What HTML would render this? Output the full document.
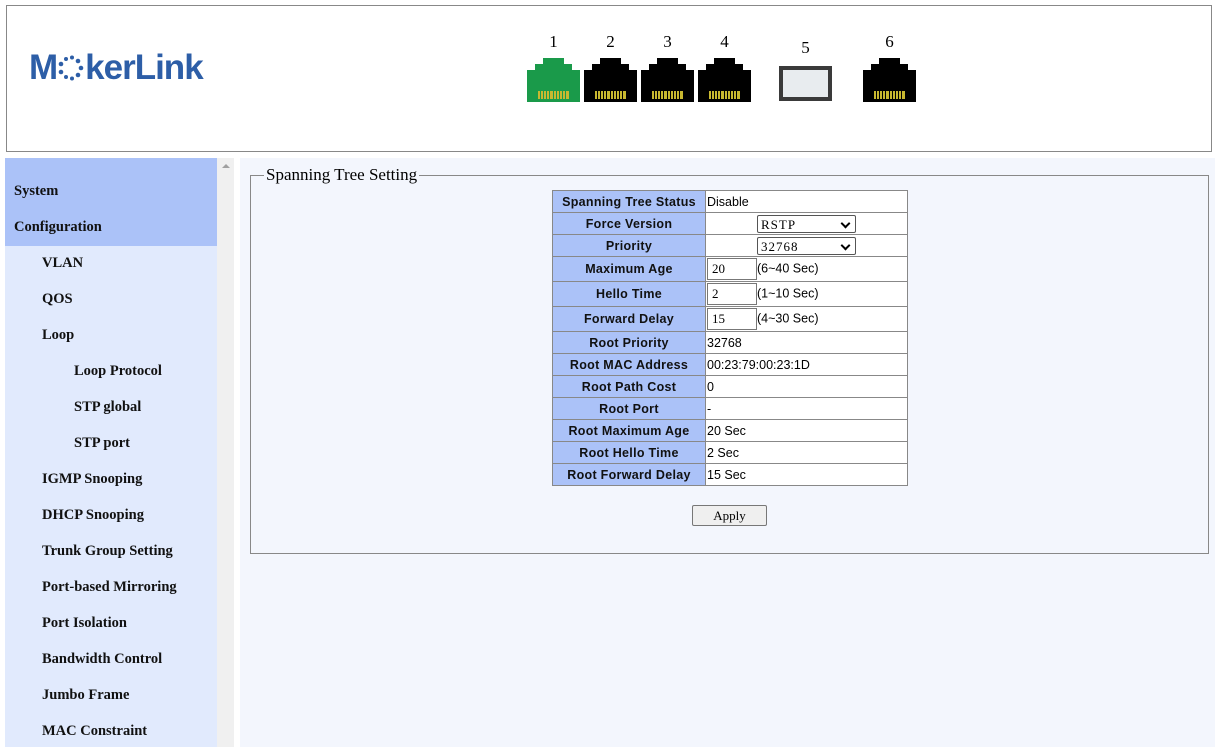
<!DOCTYPE html>
<html><head><meta charset="utf-8"><style>
body{margin:0;width:1215px;height:747px;overflow:hidden;background:#fff;font-family:"Liberation Serif",serif;position:relative}
.abs{position:absolute}
#hdr{left:6px;top:5px;width:1204px;height:145px;border:1px solid #888;background:#fff}
.num{position:absolute;top:32px;font-size:17px;width:53px;text-align:center}
#side{left:5px;top:158px;width:212px;height:589px;background:#e1eafd}
#sidetop{left:5px;top:158px;width:212px;height:88px;background:#abc2f8}
.si{position:absolute;font-weight:bold;font-size:14.5px;color:#111}
#scroll{left:217px;top:158px;width:17px;height:589px;background:#f0f0f0}
#main{left:240px;top:158px;width:975px;height:589px;background:#f3f6fd}
#fs{left:250px;top:175px;width:957px;height:377px;border:1px solid #888}
#leg{left:264px;top:165px;font-size:17px;background:#f3f6fd;padding:0 2px}
table{position:absolute;left:552px;top:190px;border-collapse:collapse;font-family:"Liberation Sans",sans-serif;font-size:12.5px}
td{border:1px solid #888;padding:0 1px;height:21px}
td.l{background:#abc2f8;font-weight:bold;width:150px;text-align:center;color:#111;letter-spacing:.3px}
td.v{background:#fff;width:199px}
tr.t td{height:24px}
.sel{display:inline-block;margin-left:50px;height:18px;border:1px solid #555;border-radius:2px;font-family:"Liberation Serif",serif;font-size:13px;line-height:17px;padding-left:3px;box-sizing:border-box;width:99px;position:relative;letter-spacing:1px;vertical-align:middle}
.sel:after{content:"";position:absolute;right:6px;top:4px;width:5px;height:5px;border-right:2px solid #000;border-bottom:2px solid #000;transform:rotate(45deg)}
.inp{display:inline-block;width:50px;height:22px;border:1px solid #777;box-sizing:border-box;font-family:"Liberation Serif",serif;font-size:13px;line-height:20px;padding-left:4px;vertical-align:middle}
#apply{left:692px;top:505px;width:75px;height:21px;border:1px solid #777;border-radius:2px;background:#efefef;font-size:13px;text-align:center;line-height:20px;box-sizing:border-box}
#logo{left:29px;top:48px;font-family:'Liberation Sans',sans-serif;font-weight:bold;font-size:35px;color:#2d5ea7;letter-spacing:-1px;display:flex;align-items:center;height:40px}
</style></head><body>
<div id="hdr" class="abs"></div>
<div id="logo" class="abs"><span>M</span><svg width="26" height="26" viewBox="0 0 26 26" style="margin:0 1px 0 1px"><g fill="#2d5ea7"><circle cx="3" cy="9" r="2.3"/><circle cx="3" cy="17" r="2.3"/><circle cx="8" cy="4" r="2"/><circle cx="8" cy="22" r="2"/><circle cx="14" cy="2.5" r="2"/><circle cx="14" cy="23.5" r="2"/><circle cx="20" cy="6" r="2.3"/><circle cx="20" cy="20" r="2.3"/><circle cx="23" cy="13" r="2.3"/></g></svg><span>kerLink</span></div>
<div class="num" style="left:527px">1</div><div class="num" style="left:584px">2</div><div class="num" style="left:641px">3</div><div class="num" style="left:698px">4</div><div class="num" style="left:779px;top:38px">5</div><div class="num" style="left:863px">6</div>
<svg class="abs" style="left:0;top:0" width="1215" height="150">
<defs><g id="rj"><polygon points="16,0 37,0 37,6 45,6 45,12 53,12 53,44 0,44 0,12 8,12 8,6 16,6"/><g fill="#c8b830"><rect x="11" y="33" width="31" height="8"/></g><g fill="currentColor"><rect x="13" y="33" width="1" height="8"/><rect x="16" y="33" width="1" height="8"/><rect x="19" y="33" width="1" height="8"/><rect x="22" y="33" width="1" height="8"/><rect x="26" y="33" width="1" height="8"/><rect x="29" y="33" width="1" height="8"/><rect x="32" y="33" width="1" height="8"/><rect x="35" y="33" width="1" height="8"/><rect x="38" y="33" width="1" height="8"/></g></g></defs>
<use href="#rj" x="527" y="58" fill="#1a9a4a" color="#1a9a4a"/>
<use href="#rj" x="584" y="58" fill="#000" color="#000"/>
<use href="#rj" x="641" y="58" fill="#000" color="#000"/>
<use href="#rj" x="698" y="58" fill="#000" color="#000"/>
<use href="#rj" x="863" y="58" fill="#000" color="#000"/>
<rect x="781" y="68" width="49" height="31" fill="#e8ecef" stroke="#3a3a3a" stroke-width="4"/>
</svg>
<div id="side" class="abs"></div><div id="sidetop" class="abs"></div>
<div class="si" style="left:14px;top:183px">System</div>
<div class="si" style="left:14px;top:219px">Configuration</div>
<div class="si" style="left:42px;top:255px">VLAN</div>
<div class="si" style="left:42px;top:291px">QOS</div>
<div class="si" style="left:42px;top:327px">Loop</div>
<div class="si" style="left:74px;top:363px">Loop Protocol</div>
<div class="si" style="left:74px;top:399px">STP global</div>
<div class="si" style="left:74px;top:435px">STP port</div>
<div class="si" style="left:42px;top:471px">IGMP Snooping</div>
<div class="si" style="left:42px;top:507px">DHCP Snooping</div>
<div class="si" style="left:42px;top:543px">Trunk Group Setting</div>
<div class="si" style="left:42px;top:579px">Port-based Mirroring</div>
<div class="si" style="left:42px;top:615px">Port Isolation</div>
<div class="si" style="left:42px;top:651px">Bandwidth Control</div>
<div class="si" style="left:42px;top:687px">Jumbo Frame</div>
<div class="si" style="left:42px;top:723px">MAC Constraint</div>
<div id="scroll" class="abs"><div style="position:absolute;left:5px;top:6px;width:0;height:0;border-left:4px solid transparent;border-right:4px solid transparent;border-bottom:4px solid #a0a0a0"></div></div>
<div id="main" class="abs"></div>
<div id="fs" class="abs"></div>
<div id="leg" class="abs">Spanning Tree Setting</div>
<table>
<tr><td class="l">Spanning Tree Status</td><td class="v">Disable</td></tr>
<tr><td class="l">Force Version</td><td class="v"><span class="sel">RSTP</span></td></tr>
<tr><td class="l">Priority</td><td class="v"><span class="sel">32768</span></td></tr>
<tr class="t"><td class="l">Maximum Age</td><td class="v"><span class="inp">20</span>(6~40 Sec)</td></tr>
<tr class="t"><td class="l">Hello Time</td><td class="v"><span class="inp">2</span>(1~10 Sec)</td></tr>
<tr class="t"><td class="l">Forward Delay</td><td class="v"><span class="inp">15</span>(4~30 Sec)</td></tr>
<tr><td class="l">Root Priority</td><td class="v">32768</td></tr>
<tr><td class="l">Root MAC Address</td><td class="v">00:23:79:00:23:1D</td></tr>
<tr><td class="l">Root Path Cost</td><td class="v">0</td></tr>
<tr><td class="l">Root Port</td><td class="v">-</td></tr>
<tr><td class="l">Root Maximum Age</td><td class="v">20 Sec</td></tr>
<tr><td class="l">Root Hello Time</td><td class="v">2 Sec</td></tr>
<tr><td class="l">Root Forward Delay</td><td class="v">15 Sec</td></tr>
</table>
<div id="apply" class="abs">Apply</div>
</body></html>
